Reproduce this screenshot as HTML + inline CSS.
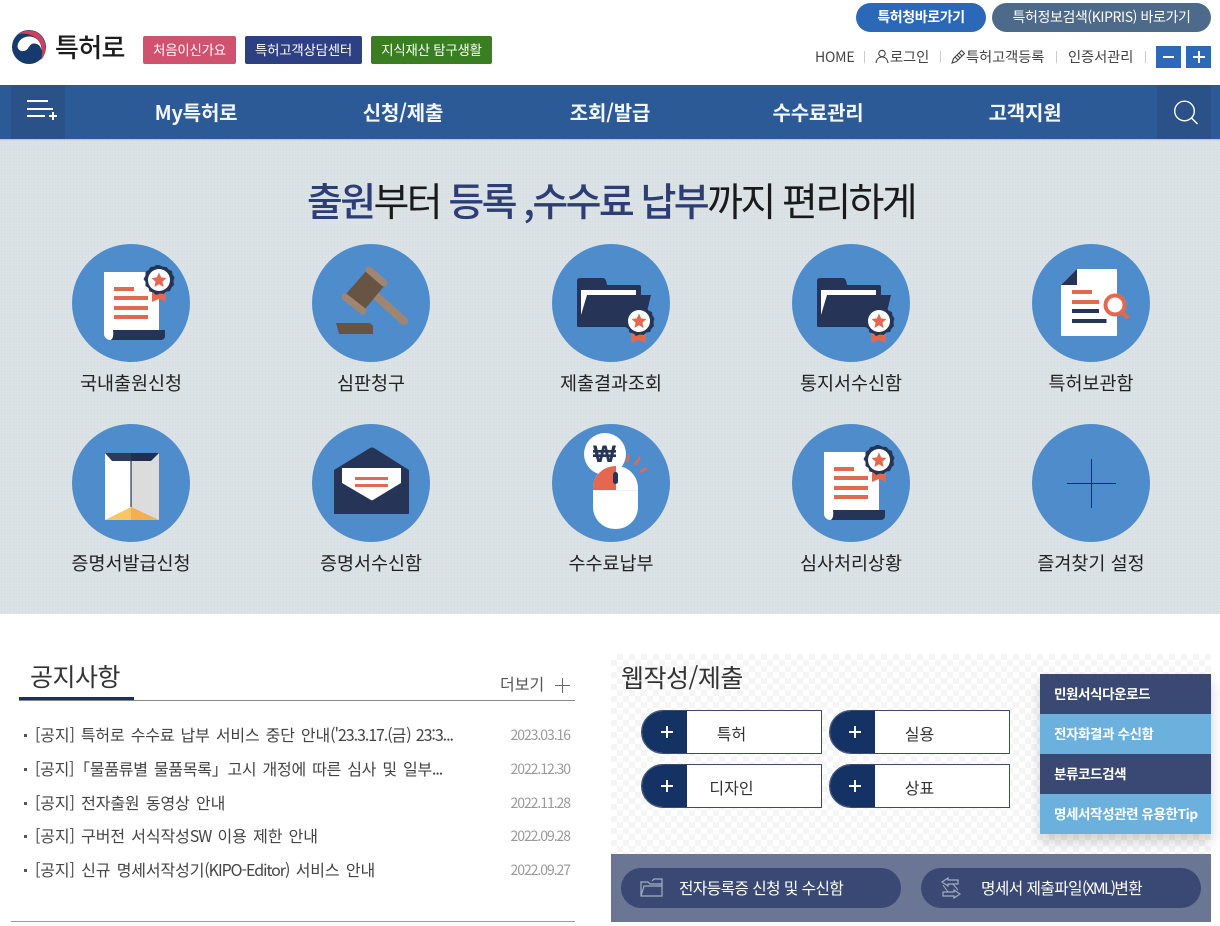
<!DOCTYPE html>
<html lang="ko"><head><meta charset="utf-8"><title>특허로</title>
<style>
*{margin:0;padding:0;box-sizing:border-box}
html,body{width:1220px;height:926px;overflow:hidden;background:#fff}
body{position:relative;font-family:"Noto Sans CJK KR","Liberation Sans",sans-serif;color:#222}
.a{position:absolute;white-space:nowrap}
.c{text-align:center}
.tag{top:36px;height:28px;line-height:26px;font-size:13.4px;color:#fff;text-align:center;border-radius:2px;letter-spacing:-.2px}
.pill{top:3px;height:29px;line-height:28px;border-radius:15px;color:#fff;font-size:14px;text-align:center;letter-spacing:-.4px}
.u{top:48px;font-size:14.3px;line-height:18px;color:#444;letter-spacing:-.1px}
.sep{top:51px;width:1px;height:12px;background:#ccc}
.nav{top:98px;height:28px;line-height:27px;color:#f2f5fa;font-size:20px;font-weight:700;letter-spacing:-.2px;text-align:center}
.lb{height:26px;line-height:26px;font-size:18.5px;color:#222;text-align:center;width:200px}
.n{left:35px;font-size:16px;line-height:20px;color:#444;word-spacing:2px;letter-spacing:-.12px}
.n b{font-weight:400;letter-spacing:-1.05px}
.d{right:650px;font-size:14px;line-height:20px;color:#999;letter-spacing:-1.05px}
.b{width:3px;height:3px;left:24px;background:#555}
.wb{height:44px;border:1px solid #3c4b70;background:#fff;border-radius:22px 0 0 22px;overflow:hidden}
.wb i{position:absolute;left:-1px;top:-1px;width:46px;height:44px;background:#143263}
.wb i:before{content:"";position:absolute;left:20px;top:15px;width:12px;height:2px;background:#fff;margin-top:6px}
.wb i:after{content:"";position:absolute;left:25px;top:16px;width:2px;height:12px;background:#fff}
.wb span{position:absolute;left:45px;right:45px;text-align:center;top:10px;font-size:16px;line-height:24px;color:#333}
.side{left:1040px;width:171px;height:40px;line-height:39px;padding-left:14px;color:#fff;font-size:13.5px;font-weight:700;letter-spacing:-.4px}
.bb{top:868px;height:40px;width:280px;border-radius:20px;background:#3a4973;color:#fff;font-size:15.7px;line-height:39px;letter-spacing:-.55px}
.bb b{font-weight:400;letter-spacing:-1.7px}
</style></head><body>

<svg class="a" style="left:12px;top:30px" width="34" height="34" viewBox="0 0 34 34">
<circle cx="17" cy="17" r="17" fill="#163a6b"/>
<path d="M6 4.500C14 -2 29 -1 33 13C34 20 33 26 29 30C31 24 31 15 26 10C20 4 12 2.500 6 4.500Z" fill="#c9435a"/>
<path d="M5.500 17C5.500 11 11 6 18 6.500C25 7 30 13 29.500 21C29 16 26 13.500 22 13.500C18 13.500 17 17.500 15 19.500C12 22 7 22 5.500 17Z" fill="#fff"/>
</svg>
<div class="a" style="left:55px;top:29px;font-size:26px;line-height:36px;font-weight:500;color:#1b1b1b;letter-spacing:-.7px">특허로</div>

<div class="a tag" style="left:143px;width:93px;background:#d1526f">처음이신가요</div>
<div class="a tag" style="left:245px;width:117px;background:#2d4084">특허고객상담센터</div>
<div class="a tag" style="left:371px;width:121px;background:#3a7e22">지식재산 탐구생활</div>

<div class="a pill" style="left:856px;width:130px;background:#2c68b8;font-weight:700">특허청바로가기</div>
<div class="a pill" style="left:992px;width:219px;background:#4e6a8a">특허정보검색(KIPRIS) 바로가기</div>

<div class="a u" style="left:815px;font-size:14px;letter-spacing:-.2px">HOME</div><div class="a sep" style="left:864px"></div>
<svg class="a" style="left:875px;top:49px" width="14" height="15" viewBox="0 0 14 15" fill="none" stroke="#444" stroke-width="1.1"><circle cx="7" cy="4.500" r="3.200"/><path d="M1 14C1.500 10 4 8 7 8S12.500 10 13 14"/></svg>
<div class="a u" style="left:890px">로그인</div><div class="a sep" style="left:940px"></div>
<svg class="a" style="left:951px;top:49px" width="15" height="15" viewBox="0 0 15 15" fill="none" stroke="#444" stroke-width="1.1"><path d="M1 14L2.500 9.500L10.500 1.500L13.500 4.500L5.500 12.500Z"/><path d="M4 8L7 11M6 6L9 9M8 4L11 7"/></svg>
<div class="a u" style="left:966px">특허고객등록</div><div class="a sep" style="left:1056px"></div>
<div class="a u" style="left:1068px">인증서관리</div><div class="a sep" style="left:1145px"></div>
<div class="a" style="left:1156px;top:46px;width:25px;height:22px;background:#2e69b8"></div>
<div class="a" style="left:1163px;top:56px;width:11px;height:2px;background:#fff"></div>
<div class="a" style="left:1186px;top:46px;width:25px;height:22px;background:#2e69b8"></div>
<div class="a" style="left:1193px;top:56px;width:12px;height:2px;background:#fff"></div>
<div class="a" style="left:1198px;top:51px;width:2px;height:12px;background:#fff"></div>

<div class="a" style="left:0;top:85px;width:1220px;height:54px;background:#2b5a96"></div>
<div class="a" style="left:11px;top:85px;width:54px;height:54px;background:#2a5288"></div>
<div class="a" style="left:1157px;top:85px;width:54px;height:54px;background:#2a5288"></div>
<svg class="a" style="left:0;top:85px" width="70" height="54" viewBox="0 0 70 54" fill="#fff"><rect x="27" y="15" width="21" height="2"/><rect x="27" y="23" width="26" height="2"/><rect x="27" y="30" width="18" height="2"/><rect x="49" y="30" width="8" height="2"/><rect x="52" y="27" width="2" height="8"/></svg>
<svg class="a" style="left:1170px;top:98px" width="30" height="28" viewBox="0 0 30 28" fill="none" stroke="#fff" stroke-width="1.4"><circle cx="14.500" cy="13" r="9.800"/><path d="M21.500 20L27.500 26"/></svg>
<div class="a nav" style="left:116px;width:160px">My특허로</div>
<div class="a nav" style="left:323px;width:160px">신청/제출</div>
<div class="a nav" style="left:530px;width:160px">조회/발급</div>
<div class="a nav" style="left:738px;width:160px">수수료관리</div>
<div class="a nav" style="left:945px;width:160px">고객지원</div>

<div class="a" style="left:0;top:139px;width:1220px;height:475px;background-color:#dce3e6;background-image:radial-gradient(circle,#d6dde0 0.7px,transparent 0.9px);background-size:3px 3px"></div>
<div class="a" style="left:0;top:139px;width:1220px;height:2px;background:linear-gradient(#b8bfc4,transparent)"></div>

<div class="a c" style="left:211px;width:800px;top:171px;font-size:39px;line-height:58px;font-weight:400;letter-spacing:-2.6px;color:#1a1a1a"><span style="color:#2d3e75;font-weight:500">출원</span>부터 <span style="color:#2d3e75;font-weight:500">등록 ,수수료 납부</span>까지 편리하게</div>

<svg class="a" style="left:0;top:0" width="1220" height="620" viewBox="0 0 1220 620">
<defs>
<g id="bdg"><path d="M0-15L3.500-13.400L7.500-13L9.500-10.500L13-9L13.500-5.500L15.500-2.500L14.500 1L15 5L12.500 7.500L11 11L7.500 11.500L4.500 14L1 13.500L-3 15L-5.500 12.500L-9.500 11.500L-10.500 8L-13.500 6L-13.500 2L-15.500-1L-13.500-4.500L-13.500-8L-10.500-10L-8.500-13L-5-13.500L-2.500-15Z" fill="#263557"/><circle r="11" fill="#fff"/><path d="M0-7.500L2.200-2.600L7.500-2L3.500 1.600L4.600 7L0 4.200L-4.600 7L-3.500 1.600L-7.500-2L-2.200-2.600Z" fill="#e2694f"/></g>
<g id="docr"><path d="M32 28H87V92C87 94 85 96 83 96H38C35 96 32 93 32 90Z" fill="#fff"/><path d="M41 86H93V92C93 94.500 91 96 89 96H38C40 96 42 93 41 86Z" fill="#263557"/><path d="M42 43H62V47H42ZM42 52H76V56H42ZM42 62H76V66H42ZM42 71H76V75H42Z" fill="#e2694f"/><path d="M80 45H94V58L87 55L80 58Z" fill="#e2694f"/><use href="#bdg" x="87" y="36"/></g>
<g id="fold"><path d="M25 37Q25 34 28 34H51Q54 34 55 41H87Q89 41 89 43V51H99L94 72V83H26Q25 83 25 81Z" fill="#263557"/><path d="M29 46H84V51H35L29 71Z" fill="#fff"/><path d="M79 85H94V99L86.500 96L79 99Z" fill="#e2694f"/><use href="#bdg" x="87" y="77"/></g>
</defs>

<g fill="#4f8ccb">
<circle cx="131" cy="303" r="59"/><circle cx="371" cy="303" r="59"/><circle cx="611" cy="303" r="59"/><circle cx="851" cy="303" r="59"/><circle cx="1091" cy="303" r="59"/>
<circle cx="131" cy="483" r="59"/><circle cx="371" cy="483" r="59"/><circle cx="611" cy="483" r="59"/><circle cx="851" cy="483" r="59"/><circle cx="1091" cy="483" r="59"/>
</g>

<use href="#docr" x="72" y="244"/>

<g transform="translate(312,244)">
<path d="M63 51L92 77" stroke="#a08672" stroke-width="8" stroke-linecap="round"/>
<path d="M55 26L73 41L53 65L34 50Z" fill="#675443"/>
<path d="M57 26L72 39M33 53L51 67" stroke="#a08672" stroke-width="7" stroke-linecap="round"/>
<path d="M24 79H58L61 82V90H27Z" fill="#675443"/>
</g>

<use href="#fold" x="552" y="244"/>
<use href="#fold" x="792" y="244"/>

<g transform="translate(1032,244)">
<path d="M45 25H84Q85 25 85 26V91Q85 92 84 92H30Q29 92 29 91V41Z" fill="#fff"/>
<path d="M29 41L45 25V41Z" fill="#263557"/>
<path d="M40 46H60V50H40ZM40 56H67V60H40Z" fill="#e2694f"/>
<path d="M40 65H67V69H40ZM40 75H74.500V79H40Z" fill="#263557"/>
<circle cx="83" cy="61" r="9.500" fill="#fff" stroke="#e2694f" stroke-width="4"/>
<path d="M90 68L95 73" stroke="#e2694f" stroke-width="4" stroke-linecap="round"/>
</g>

<g transform="translate(72,424)">
<rect x="33" y="29" width="27" height="67" fill="#fff"/><rect x="59" y="29" width="28" height="67" fill="#dcdcdc"/>
<rect x="58.300" y="29" width="1.500" height="54" fill="#4a5a78"/>
<path d="M33 29H59V37H40Z" fill="#2b3b5e"/><path d="M59 29H87L79 37H59Z" fill="#232f4e"/>
<path d="M33 96L59 83V96Z" fill="#f7c765"/><path d="M59 83L87 96H59Z" fill="#f5ae50"/>
</g>

<g transform="translate(312,424)">
<path d="M58 24Q60 23 62 24L97 46V89Q97 90 96 90H23Q22 90 22 89V46Z" fill="#263557"/>
<path d="M30 44H89V59L61 76Q60 76.500 59 76L30 59Z" fill="#fff"/>
<path d="M43 53H76V56H43ZM43 60H76V63H43Z" fill="#e2694f"/>
</g>

<g transform="translate(552,424)">
<circle cx="53" cy="30" r="21" fill="#fff"/>
<text x="41" y="38" textLength="23" lengthAdjust="spacingAndGlyphs" font-family="'Liberation Sans','Noto Sans CJK KR',sans-serif" font-size="24" font-weight="700" fill="#263557">₩</text>
<rect x="41" y="42" width="45" height="63" rx="22" fill="#fff"/>
<path d="M41 66V64C41 52 51 42 64 42V66Z" fill="#e2694f"/>
<rect x="41" y="66" width="45" height="0.600" fill="#e6e6e6"/>
<rect x="61" y="48" width="5" height="12" rx="2.500" fill="#263557"/>
<path d="M77 30L75 38M88 33L83 41M95 44L88 48" stroke="#e2694f" stroke-width="2.500"/>
</g>

<use href="#docr" x="792" y="424"/>

<path d="M1067 483.500H1116M1091.500 459V508" stroke="#233" stroke-width="1"/>
</svg>

<div class="a lb" style="left:31px;top:370px">국내출원신청</div>
<div class="a lb" style="left:271px;top:370px">심판청구</div>
<div class="a lb" style="left:511px;top:370px">제출결과조회</div>
<div class="a lb" style="left:751px;top:370px">통지서수신함</div>
<div class="a lb" style="left:991px;top:370px">특허보관함</div>
<div class="a lb" style="left:31px;top:550px">증명서발급신청</div>
<div class="a lb" style="left:271px;top:550px">증명서수신함</div>
<div class="a lb" style="left:511px;top:550px">수수료납부</div>
<div class="a lb" style="left:751px;top:550px">심사처리상황</div>
<div class="a lb" style="left:991px;top:550px">즐겨찾기 설정</div>

<div class="a" style="left:30px;top:658px;font-size:25px;line-height:36px;color:#333;letter-spacing:-.5px">공지사항</div>
<div class="a" style="left:19px;top:700px;width:556px;height:1px;background:#888"></div>
<div class="a" style="left:19px;top:697px;width:115px;height:3px;background:#143263"></div>
<div class="a" style="left:500px;top:671px;font-size:16px;line-height:24px;color:#555">더보기</div>
<div class="a" style="left:555px;top:685px;width:15px;height:1px;background:#666"></div>
<div class="a" style="left:562px;top:678px;width:1px;height:15px;background:#666"></div>

<div class="a b" style="top:734px"></div><div class="a n" style="top:724px;word-spacing:1.7px">[공지] 특허로 수수료 납부 서비스 중단 안내<b>('23.3.17.(</b>금<b>) 23:3...</b></div><div class="a d" style="top:725px">2023.03.16</div>
<div class="a b" style="top:768px"></div><div class="a n" style="top:758px;letter-spacing:-.27px">[공지]「물품류별 물품목록」고시 개정에 따른 심사 및 일부<b>...</b></div><div class="a d" style="top:759px">2022.12.30</div>
<div class="a b" style="top:802px"></div><div class="a n" style="top:792px">[공지] 전자출원 동영상 안내</div><div class="a d" style="top:793px">2022.11.28</div>
<div class="a b" style="top:835px"></div><div class="a n" style="top:825px">[공지] 구버전 서식작성<b>SW</b> 이용 제한 안내</div><div class="a d" style="top:826px">2022.09.28</div>
<div class="a b" style="top:869px"></div><div class="a n" style="top:859px">[공지] 신규 명세서작성기<b>(KIPO-Editor)</b> 서비스 안내</div><div class="a d" style="top:860px">2022.09.27</div>
<div class="a" style="left:11px;top:921px;width:564px;height:1px;background:#999"></div>

<div class="a" style="left:611px;top:654px;width:600px;height:200px;background-color:#fff;background-image:conic-gradient(#f5f5f5 25%,#fff 0 50%,#f5f5f5 0 75%,#fff 0);background-size:12px 12px"></div>
<div class="a" style="left:621px;top:659px;font-size:25px;line-height:36px;color:#333;letter-spacing:-.5px">웹작성/제출</div>

<div class="a wb" style="left:641px;top:710px;width:181px"><i></i><span>특허</span></div>
<div class="a wb" style="left:829px;top:710px;width:181px"><i></i><span>실용</span></div>
<div class="a wb" style="left:641px;top:764px;width:181px"><i></i><span>디자인</span></div>
<div class="a wb" style="left:829px;top:764px;width:181px"><i></i><span>상표</span></div>

<div class="a" style="left:1040px;top:674px;width:171px;height:160px;box-shadow:0 8px 12px rgba(0,0,0,.18)"></div>
<div class="a side" style="top:674px;background:#3a4973">민원서식다운로드</div>
<div class="a side" style="top:714px;background:#6cb0de">전자화결과 수신함</div>
<div class="a side" style="top:754px;background:#3a4973">분류코드검색</div>
<div class="a side" style="top:794px;background:#6cb0de">명세서작성관련 유용한Tip</div>

<div class="a" style="left:611px;top:854px;width:600px;height:68px;background:#6b7694"></div>
<div class="a bb" style="left:621px;padding-left:58px">전자등록증 신청 및 수신함</div>
<div class="a bb" style="left:921px;padding-left:60px">명세서 제출파일<b>(XML)</b>변환</div>
<svg class="a" style="left:638px;top:876px" width="28" height="24" viewBox="0 0 28 24" fill="none" stroke="#a5adc2" stroke-width="1.200"><path d="M3 20V6H10L12 8H24V20Z"/><path d="M3 20L6 10H24M24 8V3H16L14 5"/></svg>
<svg class="a" style="left:940px;top:877px" width="22" height="22" viewBox="0 0 22 22" fill="none" stroke="#a5adc2" stroke-width="1.200"><path d="M8 1L2 5L8 9V7H18V3H8ZM14 13L20 17L14 21V19H3V15H14Z"/><path d="M3 8L8 15M13 7L18 13" stroke-width="1"/></svg>

</body></html>
